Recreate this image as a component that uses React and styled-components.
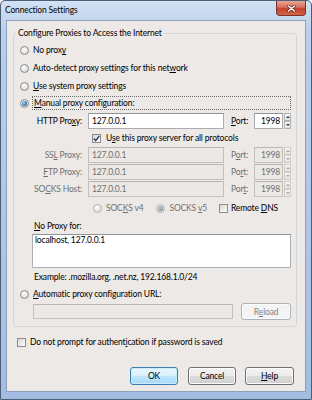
import React from "react";
import styled, { createGlobalStyle } from "styled-components";

const GlobalStyle = createGlobalStyle`
  html, body { margin: 0; padding: 0; background: #ffffff; }
  body { font-family: Lato, "Open Sans", sans-serif; font-size: 8.5px; letter-spacing: -0.15px; color: #000; }
  * { box-sizing: border-box; }
`;

const Window = styled.div`
  width: 312px;
  height: 400px;
  display: flex;
  flex-direction: column;
  border: 1px solid #4d5f78;
  border-radius: 5px 5px 0 0;
  background: linear-gradient(#d3e2f4, #b9cfeb 30px, #aac3e5 300px, #a3bde2);
  padding: 0 5px 7px 5px;
  overflow: hidden;
`;

const TitleBar = styled.div`
  height: 19px;
  display: flex;
  align-items: flex-start;
`;

const Title = styled.div`
  font-size: 8.5px;
  line-height: 19px;
  margin-left: -1px;
  color: #000;
`;

const CloseBtn = styled.div`
  margin-left: auto;
  width: 30px;
  height: 15px;
  border: 1px solid #7c3329;
  border-top: none;
  border-radius: 0 0 4px 4px;
  background: linear-gradient(#e9a696, #d66d5c 45%, #c2412b 55%, #d0654a);
  display: flex;
  align-items: center;
  justify-content: center;
`;

const Client = styled.div`
  flex: 1;
  background: #ece9e6;
  border: 1px solid #8ea1bb;
  display: flex;
  flex-direction: column;
`;

const Group = styled.fieldset`
  margin: 7px 8px 0 6px;
  padding: 0;
  border: 1px solid #d3d6d9;
  border-radius: 3px;
  min-width: 0;
`;

const Legend = styled.legend`
  margin-left: 2px;
  padding: 0 2px;
  font-size: 8.5px;
  line-height: 11px;
`;

const GroupBody = styled.div`
  padding: 4px 5px 6px 6px;
  display: flex;
  flex-direction: column;
`;

const Row = styled.div`
  display: flex;
  align-items: center;
  height: ${(p) => p.$h || 14}px;
  margin-top: ${(p) => p.$mt || 0}px;
  margin-left: ${(p) => p.$ml || 0}px;
`;

const Label = styled.span`
  color: ${(p) => (p.$disabled ? "#6f6f6f" : "#000")};
  white-space: nowrap;
  line-height: 12px;
  margin-left: ${(p) => p.$ml || 0}px;
`;

const U = styled.span`
  text-decoration: underline;
  text-underline-offset: 1px;
`;

const Radio = styled.span`
  flex: none;
  width: 9px;
  height: 9px;
  border-radius: 50%;
  border: 1px solid ${(p) => (p.$disabled ? "#b4b4b4" : "#8a8c8e")};
  background: radial-gradient(circle at 40% 35%, #ffffff, #e0e0e0 65%, #c8c8c8);
  display: inline-flex;
  align-items: center;
  justify-content: center;
  margin-left: ${(p) => p.$ml || 0}px;
  margin-right: ${(p) => p.$gap || 4}px;
  &::after {
    content: "";
    display: ${(p) => (p.$checked ? "block" : "none")};
    width: 5px;
    height: 5px;
    border-radius: 50%;
    background: ${(p) =>
      p.$disabled
        ? "radial-gradient(circle at 40% 40%, #cfcfcf, #8a8a8a 70%)"
        : "radial-gradient(circle at 40% 40%, #a8dcf8, #2c74ae 60%, #1a4a78)"};
  }
`;

const Check = styled.span`
  flex: none;
  width: 9px;
  height: 9px;
  border: 1px solid #8a8c8e;
  background: linear-gradient(135deg, #d8d8d8, #fdfdfd);
  display: inline-flex;
  align-items: center;
  justify-content: center;
  margin-left: ${(p) => p.$ml || 0}px;
  margin-right: ${(p) => p.$gap || 4}px;
`;

const Focus = styled.span`
  flex: 1;
  height: 14px;
  margin-left: -1px;
  padding-left: 1px;
  border: 1px dotted #6a6a6a;
  display: flex;
  align-items: center;
`;

const RowLabel = styled.span`
  width: 62px;
  text-align: right;
  color: ${(p) => (p.$disabled ? "#6f6f6f" : "#000")};
  white-space: nowrap;
`;

const Field = styled.div`
  flex: none;
  width: ${(p) => p.$w}px;
  height: ${(p) => p.$h || 16}px;
  margin-left: ${(p) => p.$ml || 0}px;
  border: 1px solid ${(p) => (p.$disabled ? "#c4c1bd" : "#abadb3")};
  border-top-color: ${(p) => (p.$disabled ? "#b9b6b2" : "#8f9397")};
  background: ${(p) => (p.$disabled ? "#ebe8e5" : "#ffffff")};
  color: ${(p) => (p.$disabled ? "#6f6f6f" : "#000")};
  padding: 0 2px 0 3px;
  line-height: ${(p) => (p.$h || 16) - 2}px;
  text-align: ${(p) => (p.$right ? "right" : "left")};
  white-space: nowrap;
  overflow: hidden;
`;

const PortLabel = styled.span`
  width: 23px;
  margin-left: 7px;
  color: ${(p) => (p.$disabled ? "#6f6f6f" : "#000")};
`;

const Spin = styled.div`
  flex: none;
  width: 7px;
  height: 16px;
  margin-left: 1px;
  display: flex;
  flex-direction: column;
`;

const SpinBtn = styled.div`
  flex: 1;
  border: 1px solid ${(p) => (p.$disabled ? "#cfcdca" : "#b2b4b6")};
  background: linear-gradient(#f6f6f6, #e2e2e2);
  display: flex;
  align-items: center;
  justify-content: center;
  &::after {
    content: "";
    border-left: 2px solid transparent;
    border-right: 2px solid transparent;
    ${(p) => (p.$down ? "border-top" : "border-bottom")}: 2px solid ${(p) => (p.$disabled ? "#a8a8a8" : "#3a3a3a")};
  }
`;

const NoProxy = styled.div`
  margin-left: 13px;
  display: flex;
  flex-direction: column;
`;

const TextArea = styled.div`
  width: 259px;
  height: 34px;
  margin-top: 1px;
  margin-left: -1px;
  background: #ffffff;
  border: 1px solid #abadb3;
  border-top-color: #8f9397;
  padding: 0 2px;
  line-height: 10px;
`;

const Hint = styled.div`
  margin-top: 2px;
  margin-left: 1px;
  height: 14px;
  line-height: 14px;
`;

const Button = styled.div`
  flex: none;
  width: ${(p) => p.$w || 48}px;
  height: ${(p) => p.$h || 18}px;
  margin-left: ${(p) => p.$ml || 0}px;
  border: 1px solid ${(p) => (p.$default ? "#3c7fb1" : p.$disabled ? "#adb2b5" : "#707070")};
  border-radius: 3px;
  background: ${(p) =>
    p.$disabled
      ? "#f4f4f4"
      : p.$default
      ? "linear-gradient(#eaf6fd 0%, #d9f0fc 50%, #bee6fd 50%, #a7d9f5 100%)"
      : "linear-gradient(#f2f2f2 0%, #ebebeb 50%, #dddddd 50%, #cfcfcf 100%)"};
  box-shadow: inset 0 0 0 1px ${(p) => (p.$default ? "#c9ecfd" : "#fcfcfc")};
  color: ${(p) => (p.$disabled ? "#838383" : "#000")};
  display: flex;
  align-items: center;
  justify-content: center;
  line-height: 12px;
`;

const ButtonBar = styled.div`
  display: flex;
  justify-content: flex-end;
  margin-top: 18px;
  padding-right: 11px;
`;

function CheckMark() {
  return (
    <svg width="7" height="7" viewBox="0 0 7 7">
      <path d="M0.8 3.6 L2.7 5.6 L6.3 0.9" fill="none" stroke="#2b3d5c" strokeWidth="1.4" />
    </svg>
  );
}

function Spinner({ disabled }) {
  return (
    <Spin>
      <SpinBtn $disabled={disabled} />
      <SpinBtn $down $disabled={disabled} />
    </Spin>
  );
}

function ProxyRow({ label, port, disabled, mt }) {
  return (
    <Row $h={16} $mt={mt}>
      <RowLabel $disabled={disabled}>{label}</RowLabel>
      <Field $w={136} $ml={6} $disabled={disabled}>
        127.0.0.1
      </Field>
      <PortLabel $disabled={disabled}>{port}</PortLabel>
      <Field $w={29} $right $disabled={disabled}>
        1998
      </Field>
      <Spinner disabled={disabled} />
    </Row>
  );
}

export default function App() {
  return (
    <>
      <GlobalStyle />
      <Window>
        <TitleBar>
          <Title>Connection Settings</Title>
          <CloseBtn>
            <svg width="9" height="7" viewBox="0 0 9 7">
              <path d="M1.5 1 L7.5 6 M7.5 1 L1.5 6" stroke="#5a1a12" strokeWidth="2.6" strokeLinecap="round" />
              <path d="M1.5 1 L7.5 6 M7.5 1 L1.5 6" stroke="#ffffff" strokeWidth="1.5" strokeLinecap="round" />
            </svg>
          </CloseBtn>
        </TitleBar>
        <Client>
          <Group>
            <Legend>Configure Proxies to Access the Internet</Legend>
            <GroupBody>
              <Row>
                <Radio />
                <Label>
                  No prox<U>y</U>
                </Label>
              </Row>
              <Row $mt={4}>
                <Radio />
                <Label>
                  Auto-detect proxy settings for this net<U>w</U>ork
                </Label>
              </Row>
              <Row $mt={4}>
                <Radio />
                <Label>
                  <U>U</U>se system proxy settings
                </Label>
              </Row>
              <Row $mt={3}>
                <Radio $checked />
                <Focus>
                  <Label>
                    <U>M</U>anual proxy configuration:
                  </Label>
                </Focus>
              </Row>
              <ProxyRow
                mt={3}
                label={
                  <>
                    HTTP Pro<U>x</U>y:
                  </>
                }
                port={
                  <>
                    <U>P</U>ort:
                  </>
                }
              />
              <Row $mt={2} $ml={72}>
                <Check $gap={5}>
                  <CheckMark />
                </Check>
                <Label>
                  U<U>s</U>e this proxy server for all protocols
                </Label>
              </Row>
              <ProxyRow
                mt={2}
                disabled
                label={
                  <>
                    SS<U>L</U> Proxy:
                  </>
                }
                port={
                  <>
                    P<U>o</U>rt:
                  </>
                }
              />
              <ProxyRow
                mt={1}
                disabled
                label={
                  <>
                    <U>F</U>TP Proxy:
                  </>
                }
                port={
                  <>
                    Po<U>r</U>t:
                  </>
                }
              />
              <ProxyRow
                mt={1}
                disabled
                label={
                  <>
                    SO<U>C</U>KS Host:
                  </>
                }
                port={
                  <>
                    Por<U>t</U>:
                  </>
                }
              />
              <Row $mt={4} $ml={73}>
                <Radio $disabled />
                <Label $disabled>
                  SOC<U>K</U>S v4
                </Label>
                <Radio $disabled $checked $ml={13} />
                <Label $disabled>
                  SOCKS <U>v</U>5
                </Label>
                <Check $ml={12} $gap={3} />
                <Label>
                  Remote <U>D</U>NS
                </Label>
              </Row>
              <NoProxy>
                <Row $mt={4} $ml={1}>
                  <Label>
                    <U>N</U>o Proxy for:
                  </Label>
                </Row>
                <TextArea>localhost, 127.0.0.1</TextArea>
                <Hint>Example: .mozilla.org, .net.nz, 192.168.1.0/24</Hint>
              </NoProxy>
              <Row $mt={3}>
                <Radio />
                <Label>
                  <U>A</U>utomatic proxy configuration URL:
                </Label>
              </Row>
              <Row $mt={2} $h={17} $ml={13}>
                <Field $w={200} $h={15} $disabled />
                <Button $w={50} $h={17} $ml={8} $disabled>
                  R<U>e</U>load
                </Button>
              </Row>
            </GroupBody>
          </Group>
          <Row $mt={8} $ml={10}>
            <Check $gap={4} />
            <Label>
              Do not prompt for authent<U>i</U>cation if password is saved
            </Label>
          </Row>
          <ButtonBar>
            <Button $default>OK</Button>
            <Button $ml={10}>Cancel</Button>
            <Button $ml={9} $w={49}>
              <U>H</U>elp
            </Button>
          </ButtonBar>
        </Client>
      </Window>
    </>
  );
}
